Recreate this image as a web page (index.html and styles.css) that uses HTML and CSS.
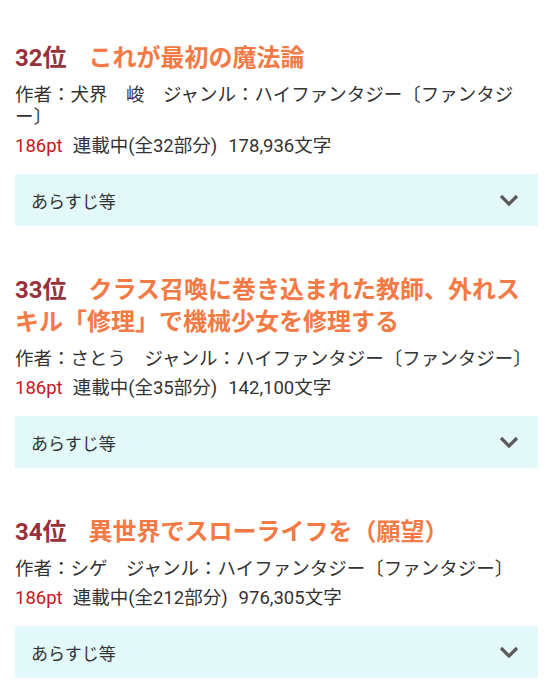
FILE: index.html
```html
<!DOCTYPE html>
<html lang="ja">
<head>
<meta charset="utf-8">
<link rel="stylesheet" href="styles.css">
</head>
<body>
<div class="list">
  <div class="item">
    <div class="title"><span class="rank">32位</span>これが最初の魔法論</div>
    <div class="author">作者：犬界　峻　ジャンル：ハイファンタジー〔ファンタジー〕</div>
    <div class="stats"><span class="pt">186pt</span><span class="status">連載中(全32部分)</span><span>178,936文字</span></div>
    <div class="box"><span>あらすじ等</span><svg class="chev" width="20" height="12" viewBox="0 0 20 12"><polyline points="2,2 10,10 18,2" fill="none" stroke="#5a5a5a" stroke-width="3.2"/></svg></div>
  </div>
  <div class="item">
    <div class="title"><span class="rank">33位</span>クラス召喚に巻き込まれた教師、外れスキル「修理」で機械少女を修理する</div>
    <div class="author">作者：さとう　ジャンル：ハイファンタジー〔ファンタジー〕</div>
    <div class="stats"><span class="pt">186pt</span><span class="status">連載中(全35部分)</span><span>142,100文字</span></div>
    <div class="box"><span>あらすじ等</span><svg class="chev" width="20" height="12" viewBox="0 0 20 12"><polyline points="2,2 10,10 18,2" fill="none" stroke="#5a5a5a" stroke-width="3.2"/></svg></div>
  </div>
  <div class="item">
    <div class="title"><span class="rank">34位</span>異世界でスローライフを（願望）</div>
    <div class="author">作者：シゲ　ジャンル：ハイファンタジー〔ファンタジー〕</div>
    <div class="stats"><span class="pt">186pt</span><span class="status">連載中(全212部分)</span><span>976,305文字</span></div>
    <div class="box"><span>あらすじ等</span><svg class="chev" width="20" height="12" viewBox="0 0 20 12"><polyline points="2,2 10,10 18,2" fill="none" stroke="#5a5a5a" stroke-width="3.2"/></svg></div>
  </div>
</div>
</body>
</html>
```
FILE: styles.css
```css
html, body {
  margin: 0;
  padding: 0;
  background: #ffffff;
}
body {
  font-family: Roboto, "Noto Sans CJK JP", sans-serif;
  color: #333333;
  overflow: hidden;
  text-spacing-trim: space-all;
}
.list {
  padding: 42px 16px 0 15px;
}
.item {
  margin-bottom: 48px;
}
.title {
  font-size: 24px;
  font-weight: bold;
  line-height: 32px;
  color: #f47a45;
}
.rank {
  color: #98313a;
  margin-right: 22px;
}
.author {
  font-size: 18.5px;
  line-height: 22px;
  margin-top: 10px;
  color: #333333;
}
.stats {
  font-size: 18.5px;
  line-height: 22px;
  margin-top: 7px;
  color: #333333;
}
.pt {
  color: #c8161d;
  margin-right: 10px;
}
.status {
  margin-right: 11px;
}
.box {
  margin-top: 17px;
  height: 52px;
  background: #e3f8f8;
  display: flex;
  align-items: center;
  justify-content: space-between;
  padding: 0 19px 0 16px;
  font-size: 17px;
  color: #333333;
}
.chev {
  display: block;
}
```
